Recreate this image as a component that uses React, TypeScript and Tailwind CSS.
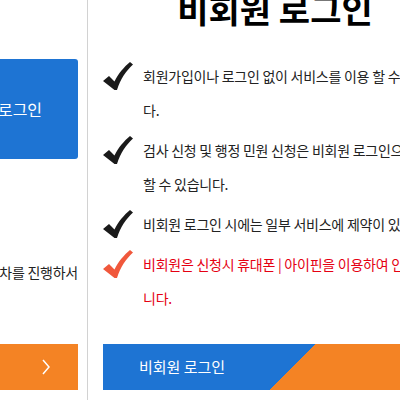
const FONT = "font-['Noto_Sans_CJK_KR','Noto_Sans',sans-serif]";

const notes = [
  { text: '회원가입이나 로그인 없이 서비스를 이용 할 수 있습니다.', warn: false },
  { text: '검사 신청 및 행정 민원 신청은 비회원 로그인으로 이용 할 수 있습니다.', warn: false },
  { text: '비회원 로그인 시에는 일부 서비스에 제약이 있습니다.', warn: false },
  { text: '비회원은 신청시 휴대폰 | 아이핀을 이용하여 인증받습니다.', warn: true },
];

function Check({ color }: { color: string }) {
  return (
    <svg width="30" height="28" viewBox="0 0 30 28" className="mt-[3px] shrink-0">
      <path
        d="M0 19 L6 14 L11.5 19.5 C15 12 21 5 27 0 L30 2.5 C23 9 17.5 17 14 28 L11.5 28 Z"
        fill={color}
      />
    </svg>
  );
}

export default function App() {
  return (
    <div className={`h-[400px] w-[400px] overflow-hidden bg-white ${FONT}`}>
      <div className="ml-[-192px] flex w-[660px]">
        {/* 회원 로그인 */}
        <div className="flex min-h-[400px] w-[280px] shrink-0 flex-col items-end border-r border-[#d2d2d2] pr-[9px]">
          <button className="mt-[59px] flex h-[100px] w-[149px] items-center justify-center rounded-[3px] bg-[#1e74d3] text-[16px] text-white">
            회원 로그인
          </button>
          <p className="mt-[96px] whitespace-nowrap text-right text-[14px] leading-[34px] tracking-[-0.25px] text-[#222]">
            본인인증 절차를 진행하서
          </p>
          <button className="mt-[55px] flex h-[46px] w-[240px] items-center justify-end bg-[#f48324] pr-[28px] text-white">
            <svg width="8" height="16" viewBox="0 0 8 16">
              <polyline points="1,1 7,8 1,15" fill="none" stroke="white" strokeWidth="1.5" />
            </svg>
          </button>
        </div>

        {/* 비회원 로그인 */}
        <div className="w-[380px] shrink-0 pl-[15px]">
          <div className="w-[344px]">
            <h2 className="mt-[-12px] text-center text-[34px] font-bold leading-[42px] text-black">
              비회원 로그인
            </h2>
            <ul className="mt-[29px] flex flex-col gap-[6px]">
              {notes.map((n) => (
                <li key={n.text} className="flex items-start gap-[10px]">
                  <Check color={n.warn ? '#f0583c' : '#1a1a1a'} />
                  <p
                    className={`text-[14px] leading-[34px] tracking-[-0.25px] ${
                      n.warn ? 'text-[#e50012]' : 'text-[#222]'
                    }`}
                  >
                    {n.text}
                  </p>
                </li>
              ))}
            </ul>
            <button className="mt-[29px] flex h-[46px] w-full items-center bg-[linear-gradient(135deg,#1e74d3_150px,#f48324_150px)] pl-[36px] text-[15px] text-white">
              비회원 로그인
            </button>
          </div>
        </div>
      </div>
    </div>
  );
}
